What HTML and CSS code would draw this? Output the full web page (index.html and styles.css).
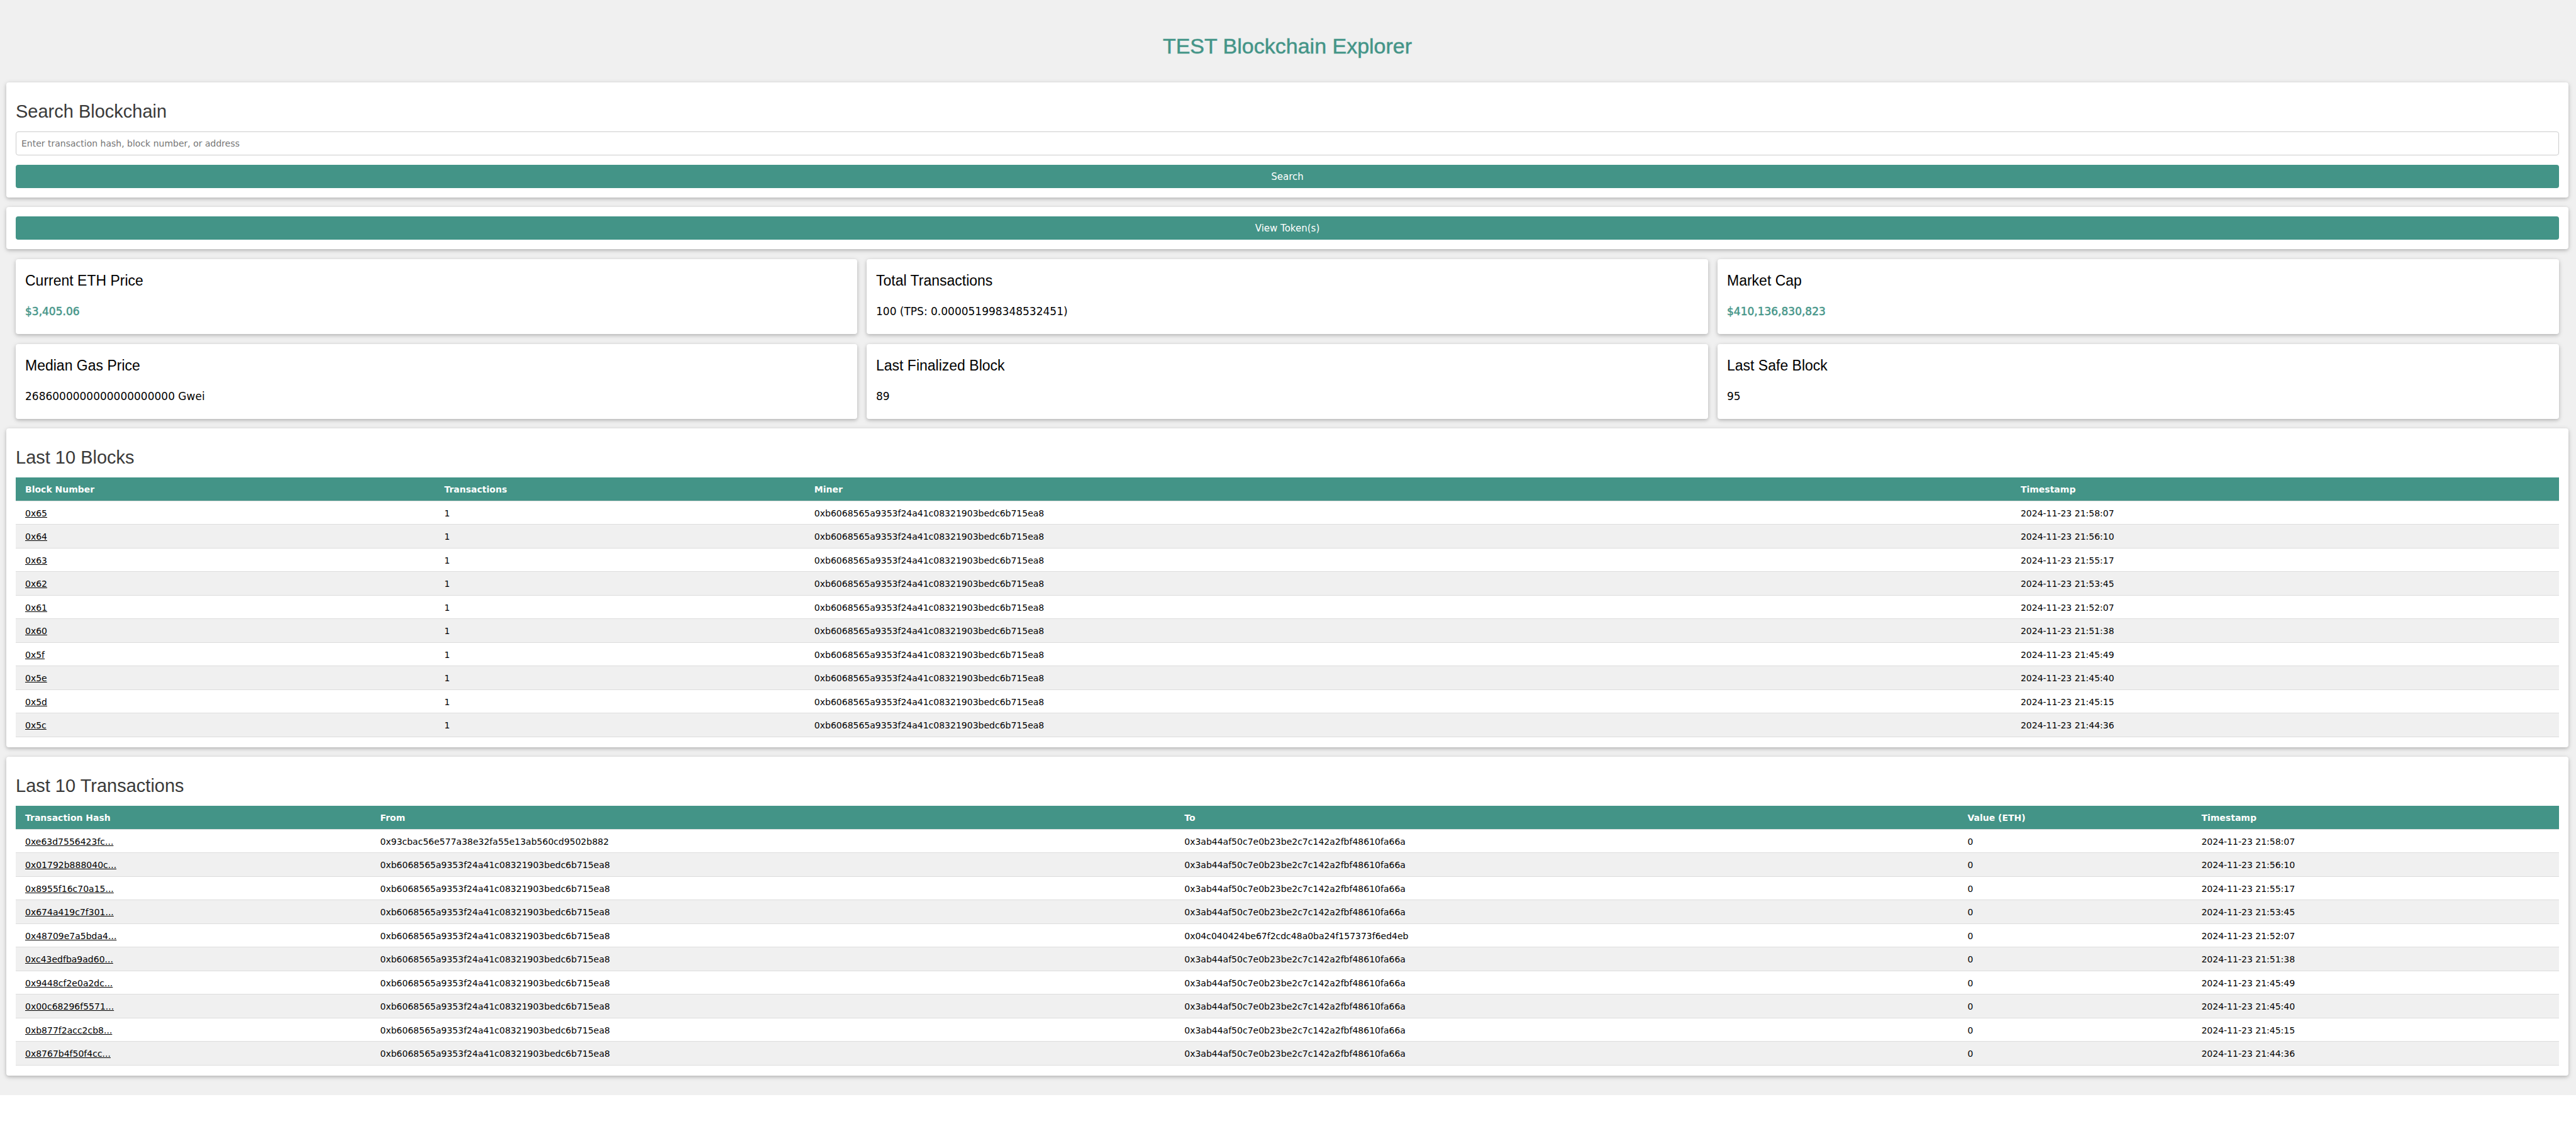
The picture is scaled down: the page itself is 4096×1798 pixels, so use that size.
FILE: index.html
```html
<!DOCTYPE html>
<html lang="en">
<head>
<meta charset="utf-8">
<title>TEST Blockchain Explorer</title>
<link rel="stylesheet" href="styles.css">
</head>
<body>
<div class="page">
  <header class="page-header">
    <h1>TEST Blockchain Explorer</h1>
  </header>
  <main>
    <form class="card search">
      <h2><label for="query">Search Blockchain</label></h2>
      <input id="query" class="search-input" type="text" placeholder="Enter transaction hash, block number, or address">
      <button class="button" type="button">Search</button>
    </form>
    <section class="card">
      <button class="button" type="button">View Token(s)</button>
    </section>
    <section class="stats">
      <article class="stat"><h3>Current ETH Price</h3><p class="money">$3,405.06</p></article>
      <article class="stat"><h3>Total Transactions</h3><p>100 (TPS: 0.000051998348532451)</p></article>
      <article class="stat"><h3>Market Cap</h3><p class="money">$410,136,830,823</p></article>
      <article class="stat"><h3>Median Gas Price</h3><p>2686000000000000000000 Gwei</p></article>
      <article class="stat"><h3>Last Finalized Block</h3><p>89</p></article>
      <article class="stat"><h3>Last Safe Block</h3><p>95</p></article>
    </section>
    <section class="card listing">
      <h2>Last 10 Blocks</h2>
      <table class="blocks">
        <thead>
          <tr><th class="b-number">Block Number</th><th class="b-count">Transactions</th><th class="b-miner">Miner</th><th class="b-time">Timestamp</th></tr>
        </thead>
        <tbody>
          <tr><td><a href="#">0x65</a></td><td>1</td><td>0xb6068565a9353f24a41c08321903bedc6b715ea8</td><td>2024-11-23 21:58:07</td></tr>
          <tr><td><a href="#">0x64</a></td><td>1</td><td>0xb6068565a9353f24a41c08321903bedc6b715ea8</td><td>2024-11-23 21:56:10</td></tr>
          <tr><td><a href="#">0x63</a></td><td>1</td><td>0xb6068565a9353f24a41c08321903bedc6b715ea8</td><td>2024-11-23 21:55:17</td></tr>
          <tr><td><a href="#">0x62</a></td><td>1</td><td>0xb6068565a9353f24a41c08321903bedc6b715ea8</td><td>2024-11-23 21:53:45</td></tr>
          <tr><td><a href="#">0x61</a></td><td>1</td><td>0xb6068565a9353f24a41c08321903bedc6b715ea8</td><td>2024-11-23 21:52:07</td></tr>
          <tr><td><a href="#">0x60</a></td><td>1</td><td>0xb6068565a9353f24a41c08321903bedc6b715ea8</td><td>2024-11-23 21:51:38</td></tr>
          <tr><td><a href="#">0x5f</a></td><td>1</td><td>0xb6068565a9353f24a41c08321903bedc6b715ea8</td><td>2024-11-23 21:45:49</td></tr>
          <tr><td><a href="#">0x5e</a></td><td>1</td><td>0xb6068565a9353f24a41c08321903bedc6b715ea8</td><td>2024-11-23 21:45:40</td></tr>
          <tr><td><a href="#">0x5d</a></td><td>1</td><td>0xb6068565a9353f24a41c08321903bedc6b715ea8</td><td>2024-11-23 21:45:15</td></tr>
          <tr><td><a href="#">0x5c</a></td><td>1</td><td>0xb6068565a9353f24a41c08321903bedc6b715ea8</td><td>2024-11-23 21:44:36</td></tr>
        </tbody>
      </table>
    </section>
    <section class="card listing">
      <h2>Last 10 Transactions</h2>
      <table class="transactions">
        <thead>
          <tr><th class="t-hash">Transaction Hash</th><th class="t-from">From</th><th class="t-to">To</th><th class="t-value">Value (ETH)</th><th class="t-time">Timestamp</th></tr>
        </thead>
        <tbody>
          <tr><td><a href="#">0xe63d7556423fc...</a></td><td>0x93cbac56e577a38e32fa55e13ab560cd9502b882</td><td>0x3ab44af50c7e0b23be2c7c142a2fbf48610fa66a</td><td>0</td><td>2024-11-23 21:58:07</td></tr>
          <tr><td><a href="#">0x01792b888040c...</a></td><td>0xb6068565a9353f24a41c08321903bedc6b715ea8</td><td>0x3ab44af50c7e0b23be2c7c142a2fbf48610fa66a</td><td>0</td><td>2024-11-23 21:56:10</td></tr>
          <tr><td><a href="#">0x8955f16c70a15...</a></td><td>0xb6068565a9353f24a41c08321903bedc6b715ea8</td><td>0x3ab44af50c7e0b23be2c7c142a2fbf48610fa66a</td><td>0</td><td>2024-11-23 21:55:17</td></tr>
          <tr><td><a href="#">0x674a419c7f301...</a></td><td>0xb6068565a9353f24a41c08321903bedc6b715ea8</td><td>0x3ab44af50c7e0b23be2c7c142a2fbf48610fa66a</td><td>0</td><td>2024-11-23 21:53:45</td></tr>
          <tr><td><a href="#">0x48709e7a5bda4...</a></td><td>0xb6068565a9353f24a41c08321903bedc6b715ea8</td><td>0x04c040424be67f2cdc48a0ba24f157373f6ed4eb</td><td>0</td><td>2024-11-23 21:52:07</td></tr>
          <tr><td><a href="#">0xc43edfba9ad60...</a></td><td>0xb6068565a9353f24a41c08321903bedc6b715ea8</td><td>0x3ab44af50c7e0b23be2c7c142a2fbf48610fa66a</td><td>0</td><td>2024-11-23 21:51:38</td></tr>
          <tr><td><a href="#">0x9448cf2e0a2dc...</a></td><td>0xb6068565a9353f24a41c08321903bedc6b715ea8</td><td>0x3ab44af50c7e0b23be2c7c142a2fbf48610fa66a</td><td>0</td><td>2024-11-23 21:45:49</td></tr>
          <tr><td><a href="#">0x00c68296f5571...</a></td><td>0xb6068565a9353f24a41c08321903bedc6b715ea8</td><td>0x3ab44af50c7e0b23be2c7c142a2fbf48610fa66a</td><td>0</td><td>2024-11-23 21:45:40</td></tr>
          <tr><td><a href="#">0xb877f2acc2cb8...</a></td><td>0xb6068565a9353f24a41c08321903bedc6b715ea8</td><td>0x3ab44af50c7e0b23be2c7c142a2fbf48610fa66a</td><td>0</td><td>2024-11-23 21:45:15</td></tr>
          <tr><td><a href="#">0x8767b4f50f4cc...</a></td><td>0xb6068565a9353f24a41c08321903bedc6b715ea8</td><td>0x3ab44af50c7e0b23be2c7c142a2fbf48610fa66a</td><td>0</td><td>2024-11-23 21:44:36</td></tr>
        </tbody>
      </table>
    </section>
  </main>
</div>
</body>
</html>
```
FILE: styles.css
```css
*, *::before, *::after { box-sizing: border-box; }

body {
  margin: 0;
  background: #fff;
  color: #000;
  font-family: Verdana, "DejaVu Sans", sans-serif;
  font-size: 14px;
  line-height: 20px;
}

h1, h2, h3 {
  font-family: Arial, "Liberation Sans", sans-serif;
  font-weight: 400;
}

.page {
  padding: 0 12px 31px 10px;
  background: #f0f0f0;
}

.page-header { padding: 47px 0 32px; }

h1 {
  margin: 0;
  color: #439487;
  font-size: 34px;
  line-height: 52px;
  text-align: center;
  -webkit-text-stroke: 1px rgba(67, 148, 135, 0.5);
}

h2 {
  margin: 10px 0;
  color: #3a3a3a;
  font-size: 29px;
  line-height: 43px;
}

main {
  display: flex;
  flex-direction: column;
  gap: 15px;
}

.card, .stat {
  border-radius: 4px;
  background: #fff;
  box-shadow: 0 2px 5px rgba(0, 0, 0, 0.16), 0 2px 10px rgba(0, 0, 0, 0.12);
}

.card {
  display: flow-root;
  padding: 15px;
}

.search-input {
  display: block;
  width: 100%;
  height: 38px;
  margin: 0 0 15px;
  padding: 0 8px;
  border: 1px solid #ccc;
  border-radius: 4px;
  background: #fff;
  font: inherit;
}

.search-input::placeholder { color: #757575; }

.button {
  display: block;
  width: 100%;
  padding: 9px 16px 8px;
  border: 0;
  border-radius: 4px;
  background: #439487;
  color: #fff;
  font: inherit;
  font-size: 15px;
  text-align: center;
}

.stats {
  display: grid;
  grid-template-columns: repeat(3, 1fr);
  gap: 16px 15px;
  margin-top: 1px;
  padding: 0 15px;
}

.stat { padding: 17px 15px 23px; }

.stat h3 {
  margin: 0 0 19px;
  font-size: 23px;
  line-height: 34px;
}

.stat p {
  margin: 0;
  font-size: 17px;
  line-height: 26px;
}

.stat .money {
  color: #439487;
  -webkit-text-stroke: 1px rgba(67, 148, 135, 0.5);
}

.listing { padding-bottom: 16px; }

table {
  width: 100%;
  border-spacing: 0;
  table-layout: fixed;
}

th, td {
  padding: 9px 8px 8px 15px;
  border-bottom: 1px solid #ddd;
  text-align: left;
}

th {
  background: #439487;
  color: #fff;
}

tbody tr:nth-child(odd) td { padding-bottom: 7px; }
tbody tr:nth-child(even) td { background: #f0f0f0; }

td a { color: inherit; }

.b-number { width: 16.48%; }
.b-count { width: 14.55%; }
.b-miner { width: 47.43%; }
.b-time { width: 21.54%; }

.t-hash { width: 13.96%; }
.t-from { width: 31.62%; }
.t-to { width: 30.79%; }
.t-value { width: 9.2%; }
.t-time { width: 14.43%; }
```
